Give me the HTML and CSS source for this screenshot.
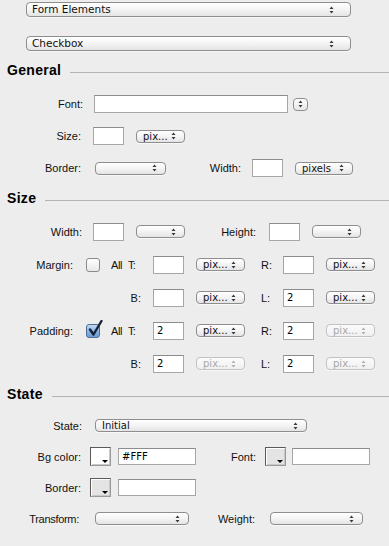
FILE: index.html
```html
<!DOCTYPE html>
<html lang="en">
<head>
  <meta charset="UTF-8">
  <title>Form Elements - Checkbox</title>
  <link rel="stylesheet" href="styles.css">
</head>
<body>
  <div id="panel">
    <div class="sel big first"><span>Form Elements</span>
      <svg class="arr" viewBox="0 0 5 8"><path d="M0.5 3 L2.5 0.5 L4.5 3 Z M0.5 5 L2.5 7.5 L4.5 5 Z"/></svg></div>
    <div class="sel big second"><span>Checkbox</span>
      <svg class="arr" viewBox="0 0 5 8"><path d="M0.5 3 L2.5 0.5 L4.5 3 Z M0.5 5 L2.5 7.5 L4.5 5 Z"/></svg></div>

    <!-- General -->
    <div class="head"><h2>General</h2><div class="rule"></div></div>
    <div class="rows rows-g">
      <div class="row">
        <label class="lbl w83">Font:</label>
        <input class="txt font-in" type="text">
        <div class="stepper"><svg class="arr" viewBox="0 0 5 8"><path d="M0.5 3 L2.5 0.5 L4.5 3 Z M0.5 5 L2.5 7.5 L4.5 5 Z"/></svg></div>
      </div>
      <div class="row">
        <label class="lbl w81">Size:</label>
        <input class="txt num ml12" type="text">
        <div class="sel s49 ml12"><span>pix...</span>
          <svg class="arr" viewBox="0 0 5 8"><path d="M0.5 3 L2.5 0.5 L4.5 3 Z M0.5 5 L2.5 7.5 L4.5 5 Z"/></svg></div>
      </div>
      <div class="row">
        <label class="lbl w81">Border:</label>
        <div class="sel s71 ml14"><span></span>
          <svg class="arr" viewBox="0 0 5 8"><path d="M0.5 3 L2.5 0.5 L4.5 3 Z M0.5 5 L2.5 7.5 L4.5 5 Z"/></svg></div>
        <label class="lbl w75">Width:</label>
        <input class="txt num ml11" type="text">
        <div class="sel s58 ml12"><span>pixels</span>
          <svg class="arr" viewBox="0 0 5 8"><path d="M0.5 3 L2.5 0.5 L4.5 3 Z M0.5 5 L2.5 7.5 L4.5 5 Z"/></svg></div>
      </div>
    </div>

    <!-- Size -->
    <div class="head"><h2>Size</h2><div class="rule"></div></div>
    <div class="rows rows-s">
      <div class="row">
        <label class="lbl w82">Width:</label>
        <input class="txt num ml11" type="text">
        <div class="sel s49 ml12"><span></span>
          <svg class="arr" viewBox="0 0 5 8"><path d="M0.5 3 L2.5 0.5 L4.5 3 Z M0.5 5 L2.5 7.5 L4.5 5 Z"/></svg></div>
        <label class="lbl w71">Height:</label>
        <input class="txt num ml13" type="text">
        <div class="sel s49 ml12"><span></span>
          <svg class="arr" viewBox="0 0 5 8"><path d="M0.5 3 L2.5 0.5 L4.5 3 Z M0.5 5 L2.5 7.5 L4.5 5 Z"/></svg></div>
      </div>
      <div class="row">
        <label class="lbl w73">Margin:</label>
        <span class="check"></span>
        <span class="all">All</span>
        <span class="side">T:</span>
        <input class="txt num" type="text">
        <div class="sel s49 ml12"><span>pix...</span>
          <svg class="arr" viewBox="0 0 5 8"><path d="M0.5 3 L2.5 0.5 L4.5 3 Z M0.5 5 L2.5 7.5 L4.5 5 Z"/></svg></div>
        <span class="side2">R:</span>
        <input class="txt num" type="text">
        <div class="sel s49 ml12"><span>pix...</span>
          <svg class="arr" viewBox="0 0 5 8"><path d="M0.5 3 L2.5 0.5 L4.5 3 Z M0.5 5 L2.5 7.5 L4.5 5 Z"/></svg></div>
      </div>
      <div class="row">
        <label class="lbl w141">B:</label>
        <input class="txt num ml12" type="text">
        <div class="sel s49 ml12"><span>pix...</span>
          <svg class="arr" viewBox="0 0 5 8"><path d="M0.5 3 L2.5 0.5 L4.5 3 Z M0.5 5 L2.5 7.5 L4.5 5 Z"/></svg></div>
        <span class="side2">L:</span>
        <input class="txt num" type="text" value="2">
        <div class="sel s49 ml12"><span>pix...</span>
          <svg class="arr" viewBox="0 0 5 8"><path d="M0.5 3 L2.5 0.5 L4.5 3 Z M0.5 5 L2.5 7.5 L4.5 5 Z"/></svg></div>
      </div>
      <div class="row">
        <label class="lbl w73">Padding:</label>
        <span class="check on">
          <svg class="tick" viewBox="0 0 16 18"><path d="M3 9.5 L6.5 14.5 L14.5 1"/></svg>
        </span>
        <span class="all">All</span>
        <span class="side">T:</span>
        <input class="txt num" type="text" value="2">
        <div class="sel s49 ml12"><span>pix...</span>
          <svg class="arr" viewBox="0 0 5 8"><path d="M0.5 3 L2.5 0.5 L4.5 3 Z M0.5 5 L2.5 7.5 L4.5 5 Z"/></svg></div>
        <span class="side2">R:</span>
        <input class="txt num" type="text" value="2">
        <div class="sel s49 ml12 off"><span>pix...</span>
          <svg class="arr" viewBox="0 0 5 8"><path d="M0.5 3 L2.5 0.5 L4.5 3 Z M0.5 5 L2.5 7.5 L4.5 5 Z"/></svg></div>
      </div>
      <div class="row">
        <label class="lbl w141">B:</label>
        <input class="txt num ml12" type="text" value="2">
        <div class="sel s49 ml12 off"><span>pix...</span>
          <svg class="arr" viewBox="0 0 5 8"><path d="M0.5 3 L2.5 0.5 L4.5 3 Z M0.5 5 L2.5 7.5 L4.5 5 Z"/></svg></div>
        <span class="side2">L:</span>
        <input class="txt num" type="text" value="2">
        <div class="sel s49 ml12 off"><span>pix...</span>
          <svg class="arr" viewBox="0 0 5 8"><path d="M0.5 3 L2.5 0.5 L4.5 3 Z M0.5 5 L2.5 7.5 L4.5 5 Z"/></svg></div>
      </div>
    </div>

    <!-- State -->
    <div class="head"><h2>State</h2><div class="rule"></div></div>
    <div class="rows rows-st">
      <div class="row">
        <label class="lbl w82">State:</label>
        <div class="sel s212 ml13"><span>Initial</span>
          <svg class="arr" viewBox="0 0 5 8"><path d="M0.5 3 L2.5 0.5 L4.5 3 Z M0.5 5 L2.5 7.5 L4.5 5 Z"/></svg></div>
      </div>
      <div class="row">
        <label class="lbl w81">Bg color:</label>
        <span class="swatch white"><svg viewBox="0 0 6 3"><path d="M0 0 H6 L3 3 Z"/></svg></span>
        <input class="txt color-in ml7" type="text" value="#FFF">
        <label class="lbl w60">Font:</label>
        <span class="swatch ml11"><svg viewBox="0 0 6 3"><path d="M0 0 H6 L3 3 Z"/></svg></span>
        <input class="txt color-in ml6" type="text">
      </div>
      <div class="row">
        <label class="lbl w81">Border:</label>
        <span class="swatch"><svg viewBox="0 0 6 3"><path d="M0 0 H6 L3 3 Z"/></svg></span>
        <input class="txt color-in ml7" type="text">
      </div>
      <div class="row">
        <label class="lbl w79 tight">Transform:</label>
        <div class="sel s94 ml16"><span></span>
          <svg class="arr" viewBox="0 0 5 8"><path d="M0.5 3 L2.5 0.5 L4.5 3 Z M0.5 5 L2.5 7.5 L4.5 5 Z"/></svg></div>
        <label class="lbl w66">Weight:</label>
        <div class="sel s93 ml15"><span></span>
          <svg class="arr" viewBox="0 0 5 8"><path d="M0.5 3 L2.5 0.5 L4.5 3 Z M0.5 5 L2.5 7.5 L4.5 5 Z"/></svg></div>
      </div>
    </div>
  </div>
</body>
</html>
```

FILE: styles.css
```css
html, body {
  margin: 0;
  padding: 0;
  background: #ededed;
}

body {
  font-family: "Liberation Sans", Arial, sans-serif;
  font-size: 11px;
  color: #111;
  width: 389px;
  height: 546px;
  overflow: hidden;
}

#panel {
  padding-top: 2px;
}

/* popup buttons (mac style) */
.sel {
  position: relative;
  box-sizing: border-box;
  height: 13px;
  border: 1px solid #8e8e8e;
  border-radius: 4px;
  background: linear-gradient(#ffffff, #f4f4f4 50%, #e4e4e4);
  box-shadow: 0 1px 0 rgba(255, 255, 255, 0.6);
  display: flex;
  align-items: center;
  font-family: "DejaVu Sans", sans-serif;
  font-size: 10px;
  color: #111;
}

.sel span {
  padding-left: 6px;
  line-height: 11px;
  white-space: nowrap;
}

.sel .arr {
  position: absolute;
  right: 8px;
  top: 50%;
  width: 5px;
  height: 8px;
  margin-top: -4px;
  fill: #3a3a3a;
}

.sel.off {
  border-color: #c2c2c2;
  color: #a8a8a8;
  background: linear-gradient(#fbfbfb, #f0f0f0);
}

.sel.off .arr {
  fill: #b0b0b0;
}

.sel.big {
  height: 15px;
  width: 325px;
  margin-left: 26px;
  font-size: 10.5px;
}

.sel.big span {
  padding-left: 5px;
}

.sel.big .arr {
  right: 16px;
}

.first { margin-top: 0; }
.second { margin-top: 19px; }

.s49 { width: 49px; }
.s58 { width: 58px; }
.s71 { width: 71px; }
.s93 { width: 93px; }
.s94 { width: 94px; }
.s212 { width: 212px; }

/* section headings */
.head {
  display: flex;
  height: 16px;
  margin-left: 7px;
}

.head h2 {
  margin: 0;
  font-size: 14px;
  line-height: 16px;
  font-weight: bold;
  letter-spacing: 0.3px;
  color: #000;
}

.head .rule {
  flex: 1;
  height: 1px;
  background: #b3b3b3;
  margin-top: 10px;
  margin-left: 9px;
}

.second + .head { margin-top: 11px; }
.rows + .head { margin-top: 6px; }

.rows-g { margin-top: 10px; }
.rows-g .row { height: 32px; }

.rows-s { margin-top: 9px; }
.rows-s .row { height: 33px; }

.rows-st { margin-top: 8px; }
.rows-st .row { height: 31px; }

.row {
  display: flex;
  align-items: center;
}

.lbl {
  flex: none;
  text-align: right;
  white-space: nowrap;
  color: #111;
}

.tight { letter-spacing: -0.3px; }

.w60 { width: 60px; }
.w66 { width: 66px; }
.w71 { width: 71px; }
.w73 { width: 73px; }
.w75 { width: 75px; }
.w79 { width: 79px; }
.w81 { width: 81px; }
.w82 { width: 82px; }
.w83 { width: 83px; }
.w141 { width: 141px; }

.ml6 { margin-left: 6px; }
.ml7 { margin-left: 7px; }
.ml11 { margin-left: 11px; }
.ml12 { margin-left: 12px; }
.ml13 { margin-left: 13px; }
.ml14 { margin-left: 14px; }
.ml15 { margin-left: 15px; }
.ml16 { margin-left: 16px; }

/* text fields */
.txt {
  box-sizing: border-box;
  height: 18px;
  margin-top: 0;
  margin-bottom: 0;
  margin-right: 0;
  padding: 0 3px;
  border: 1px solid #a6a6a6;
  border-top-color: #8c8c8c;
  background: #fff;
  font-family: "DejaVu Sans", sans-serif;
  font-size: 10px;
  color: #000;
  outline: none;
}

.font-in {
  width: 194px;
  margin-left: 11px;
}

.num { width: 31px; }

.color-in {
  width: 78px;
  height: 17px;
}

.stepper {
  position: relative;
  box-sizing: border-box;
  width: 15px;
  height: 13px;
  margin-left: 5px;
  border: 1px solid #8e8e8e;
  border-radius: 4px;
  background: linear-gradient(#ffffff, #e6e6e6);
}

.stepper .arr {
  position: absolute;
  left: 4px;
  top: 1.5px;
  width: 5px;
  height: 8px;
  fill: #3a3a3a;
}

/* checkboxes */
.check {
  position: relative;
  box-sizing: border-box;
  flex: none;
  width: 14px;
  height: 14px;
  margin-left: 13px;
  border: 1px solid #8a8a8a;
  border-radius: 3px;
  background: linear-gradient(#ffffff, #e8e8e8);
}

.check.on {
  border-color: #4d6d96;
  background: linear-gradient(#c5daf2, #8db4e3 50%, #6c9bd6);
}

.check .tick {
  position: absolute;
  left: 0;
  top: -5px;
  width: 16px;
  height: 18px;
  fill: none;
  stroke: #14233a;
  stroke-width: 2.4;
  stroke-linecap: round;
  stroke-linejoin: round;
}

.all {
  flex: none;
  width: 17px;
  margin-left: 11px;
  letter-spacing: -0.4px;
}

.side {
  flex: none;
  width: 25px;
  letter-spacing: -0.8px;
}

.side2 {
  flex: none;
  width: 22px;
  margin-left: 16px;
}

/* color wells */
.swatch {
  position: relative;
  box-sizing: border-box;
  flex: none;
  width: 21px;
  height: 19px;
  margin-left: 9px;
  border: 1px solid #9a9a9a;
  border-top-color: #5a5a5a;
  border-left-color: #5a5a5a;
  background: #e4e4e4;
  box-shadow: inset 1px 1px 0 #fff, inset -1px -1px 0 #c8c8c8;
}

.swatch.white {
  background: #fff;
}

.swatch svg {
  position: absolute;
  right: 2px;
  bottom: 2px;
  width: 6px;
  height: 3px;
  fill: #000;
}
```
